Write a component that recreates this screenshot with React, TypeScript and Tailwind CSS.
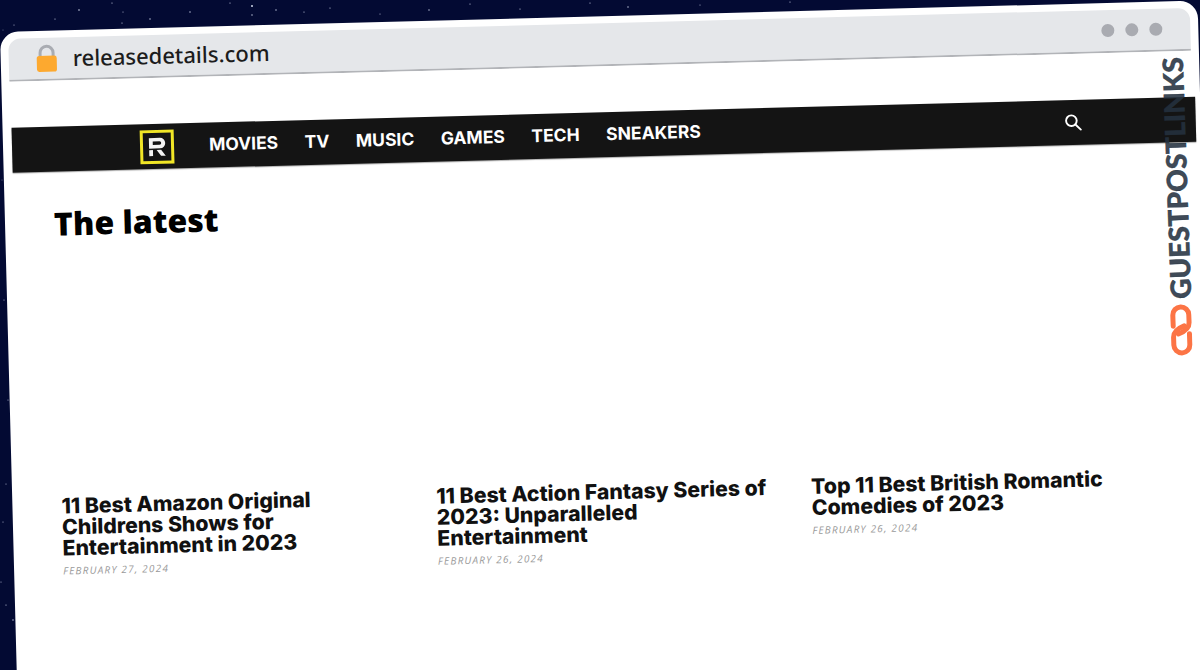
const NAV_ITEMS = ["MOVIES", "TV", "MUSIC", "GAMES", "TECH", "SNEAKERS"];

const ARTICLES = [
  { title: ["11 Best Amazon Original", "Childrens Shows for", "Entertainment in 2023"], date: "FEBRUARY 27, 2024" },
  { title: ["11 Best Action Fantasy Series of", "2023: Unparalleled", "Entertainment"], date: "FEBRUARY 26, 2024" },
  { title: ["Top 11 Best British Romantic", "Comedies of 2023"], date: "FEBRUARY 26, 2024" },
];

const STARS = [
  [79, 10, 0.8], [55, 19, 0.6], [112, 3, 0.6], [122, 23, 0.6], [150, 19, 0.7], [123, 12, 0.5], [190, 12, 0.7],
  [230, 3, 0.6], [252, 6, 1], [252, 15, 0.7], [276, 10, 0.7], [304, 12, 0.6], [330, 8, 0.6], [380, 14, 0.5],
  [429, 10, 0.7], [470, 4, 0.6], [520, 9, 0.6], [590, 3, 0.6], [628, 7, 0.7], [700, 5, 0.5], [790, 2, 0.6],
  [14, 25, 0.5], [3, 30, 0.4], [6, 484, 0.5], [3, 522, 0.5], [1, 582, 0.5], [6, 605, 0.6], [13, 620, 0.7],
  [4, 300, 0.5], [2, 180, 0.4], [8, 400, 0.5],
];

function LockIcon() {
  return (
    <svg viewBox="0 0 24 30" className="w-[24px] h-[30px] shrink-0">
      <path d="M5.5 14V9a6.5 6.5 0 0 1 13 0v5" fill="none" stroke="#a9acb2" strokeWidth="3" />
      <rect x="2" y="12" width="20" height="16" rx="2.5" fill="#fda92f" />
    </svg>
  );
}

function Logo() {
  return (
    <div className="w-[34px] h-[34px] border-[3px] border-[#f0e526] flex items-center justify-center shrink-0">
      <svg viewBox="0 0 20 20" className="w-[20px] h-[20px]">
        <path d="M2 1h11a5 5 0 0 1 0 10.500H2z M5.800 4.500v3.500h6.700a1.750 1.750 0 0 0 0-3.500z" fill="#f4f4f4" fillRule="evenodd" />
        <path d="M2 13h3.800v6H2z M9.500 13h4.500l4.500 6h-4.700z" fill="#f4f4f4" />
      </svg>
    </div>
  );
}

function SearchIcon() {
  return (
    <svg viewBox="0 0 16 16" className="ml-auto w-[17px] h-[17px]" fill="none" stroke="#ffffff" strokeWidth="1.8" strokeLinecap="round">
      <circle cx="6.300" cy="6.300" r="5" />
      <path d="M10 10l5 5" />
    </svg>
  );
}

function ChainIcon() {
  return (
    <svg viewBox="0 0 52 22" className="w-[52px] h-[22px] shrink-0" fill="none" stroke="#fc7445" strokeWidth="5" strokeLinecap="round">
      <path d="M30 3H41A8 8 0 0 1 41 19H33Q26 19 22 8" />
      <path d="M22 19H11A8 8 0 0 1 11 3H19Q26 3 30 14" />
    </svg>
  );
}

export default function App() {
  return (
    <div className="relative w-[1200px] h-[670px] overflow-hidden bg-[#030a33]">
      <svg className="absolute inset-0 w-full h-full" viewBox="0 0 1200 670">
        {STARS.map(([x, y, r]) => (
          <circle key={`${x}-${y}`} cx={x} cy={y} r={r} fill="#cfd6ea" />
        ))}
      </svg>

      <div className="relative pt-[32px]">
        <div className="w-[1198px] h-[720px] bg-white rounded-t-[18px] pt-[7px] px-[8px] origin-top-left [transform:rotate(-1.5deg)]">
          <div className="h-[43px] bg-[#e5e7ea] rounded-t-[12px] border-b-2 border-[#b2b4b8] flex items-center pl-[26px] pr-[28px]">
            <LockIcon />
            <span className="ml-[14px] text-[22px] text-[#1c1c1c] font-medium font-['Noto_Sans',sans-serif]">releasedetails.com</span>
            <div className="ml-auto flex gap-[11px]">
              <span className="w-[13px] h-[13px] rounded-full bg-[#a9abb1]" />
              <span className="w-[13px] h-[13px] rounded-full bg-[#a9abb1]" />
              <span className="w-[13px] h-[13px] rounded-full bg-[#a9abb1]" />
            </div>
          </div>

          <div className="mt-[46px] h-[45px] bg-[#141414] flex items-center pl-[128px] pr-[114px] ml-[1px] mr-[-3px] shadow-[0_1px_1px_rgba(0,0,0,0.3)]">
            <Logo />
            <nav className="ml-[35px] flex gap-[26.500px] text-[17.500px] font-bold text-white font-['Inter',sans-serif]">
              {NAV_ITEMS.map((item) => (
                <span key={item}>{item}</span>
              ))}
            </nav>
            <SearchIcon />
          </div>

          <h1 className="mt-[32px] ml-[41px] text-[32px] leading-[40px] font-black text-black font-['Noto_Sans',sans-serif]">The latest</h1>

          <div className="mt-[252px] ml-[41px] grid grid-cols-3 w-[1125px]">
            {ARTICLES.map((article) => (
              <div key={article.date + article.title[0]}>
                <h3 className="text-[21.200px] leading-[21px] font-extrabold text-[#111111] font-['Inter',sans-serif]">
                  {article.title.map((line) => (
                    <div key={line}>{line}</div>
                  ))}
                </h3>
                <div className="mt-[5px] text-[10px] italic font-medium tracking-[1.2px] text-[#9a9a9a] font-['Open_Sans',sans-serif]">{article.date}</div>
              </div>
            ))}
          </div>
        </div>
      </div>

      <div className="absolute left-[1027px] top-[192px] w-[300px] flex items-center gap-[5px] [transform:rotate(-92deg)]">
        <ChainIcon />
        <span className="text-[28px] leading-[28px] font-black text-[#24313f]/90 [-webkit-text-stroke:0.4px_#24313f] font-['Lato',sans-serif]">GUESTPOSTLINKS</span>
      </div>
    </div>
  );
}
